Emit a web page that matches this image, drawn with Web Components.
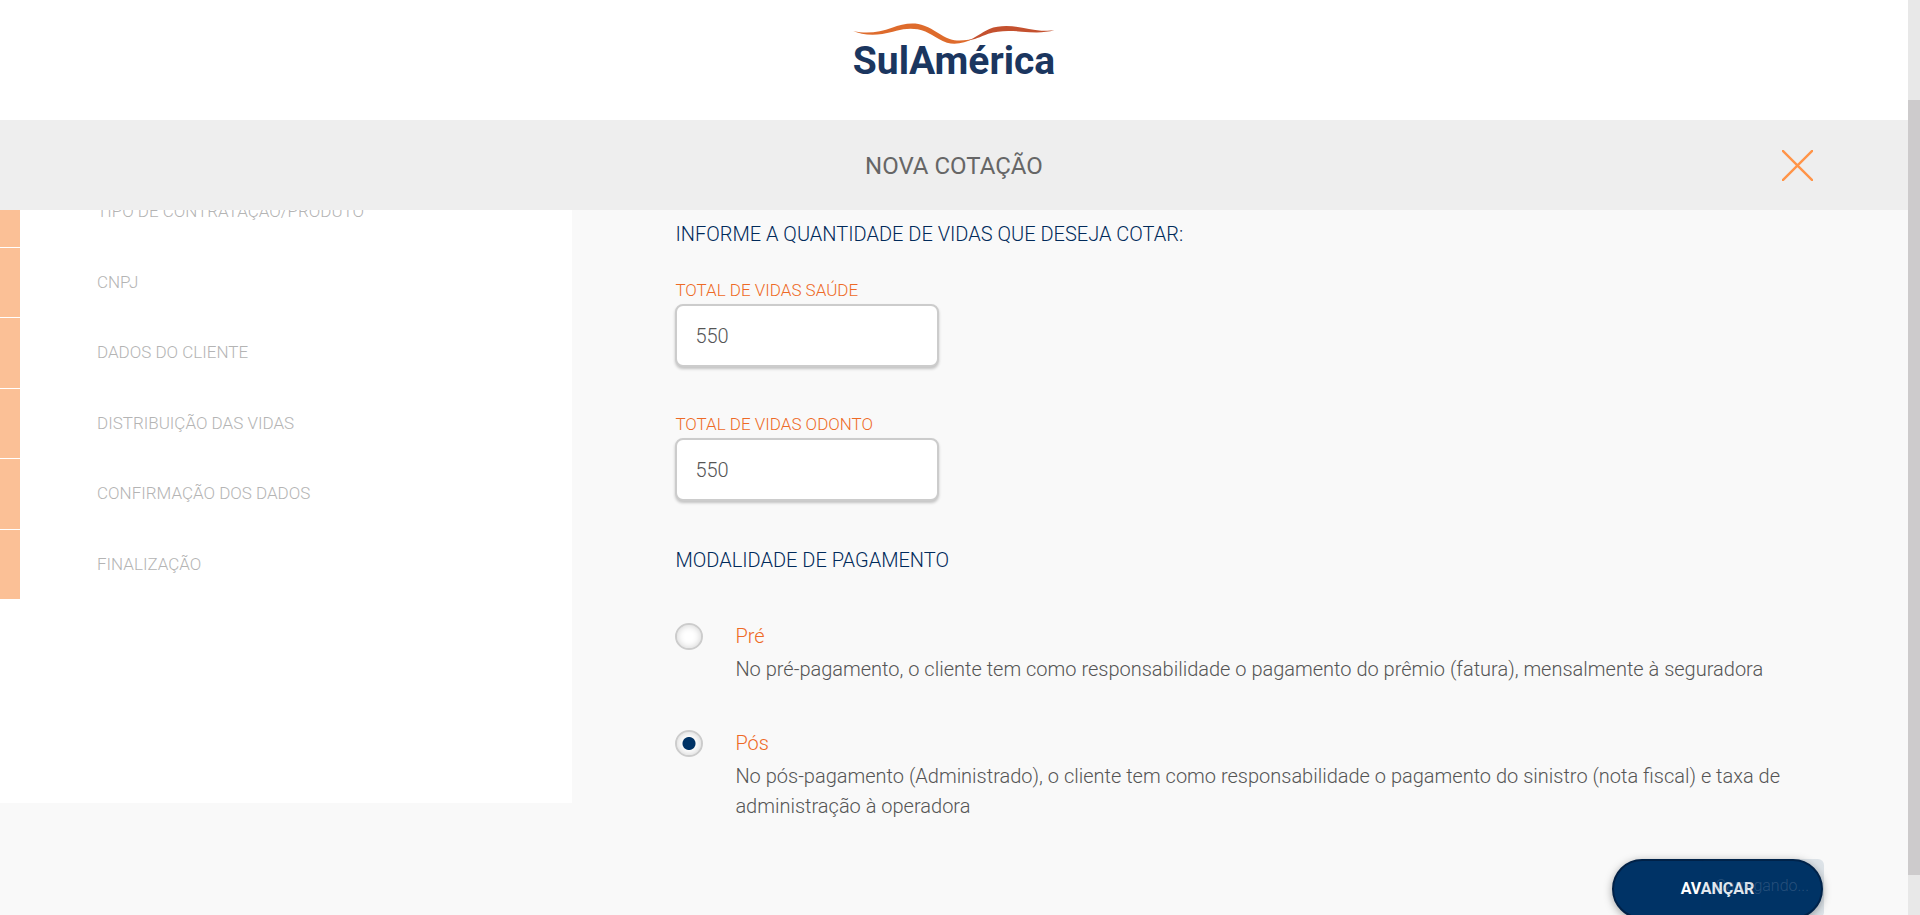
<!DOCTYPE html>
<html lang="pt-BR">
<head>
<meta charset="utf-8">
<meta name="viewport" content="width=device-width, initial-scale=1">
<title>Nova cotação - SulAmérica</title>
<style>
html, body { margin: 0; height: 100%; }
body {
  --navy: #003366;
  --orange: #ee6a26;
  --gray: #555;
  --line: #ccc;
  font-family: Roboto, "Liberation Sans", sans-serif;
  font-weight: 300;
  font-size: 20px;
  line-height: 30px;
  color: var(--gray);
  background: #f9f9f9;
}
</style>
</head>
<body>
<quote-app>
  <brand-header slot="header"></brand-header>
  <title-bar slot="header">NOVA COTAÇÃO</title-bar>
  <step-list slot="steps">
    <step-item>TIPO DE CONTRATAÇÃO/PRODUTO</step-item>
    <step-item>CNPJ</step-item>
    <step-item>DADOS DO CLIENTE</step-item>
    <step-item>DISTRIBUIÇÃO DAS VIDAS</step-item>
    <step-item>CONFIRMAÇÃO DOS DADOS</step-item>
    <step-item>FINALIZAÇÃO</step-item>
  </step-list>
  <quote-form>
    <section-heading>INFORME A QUANTIDADE DE VIDAS QUE DESEJA COTAR:</section-heading>
    <lives-field label="TOTAL DE VIDAS SAÚDE" value="550"></lives-field>
    <lives-field label="TOTAL DE VIDAS ODONTO" value="550"></lives-field>
    <section-heading>MODALIDADE DE PAGAMENTO</section-heading>
    <payment-options></payment-options>
    <form-actions></form-actions>
  </quote-form>
  <scroll-rail slot="rail"></scroll-rail>
</quote-app>

<script>
function define(name, html, setup) {
  const template = document.createElement('template');
  template.innerHTML = html;
  customElements.define(name, class extends HTMLElement {
    constructor() {
      super();
      this.attachShadow({ mode: 'open' }).append(template.content.cloneNode(true));
    }
    connectedCallback() { if (setup) setup(this, this.shadowRoot); }
  });
}

define('quote-app', `
<style>
  :host { display: grid; grid-template-columns: minmax(0, 1fr) 12px; height: 100vh; overflow: hidden; }
  .page { display: flex; flex-direction: column; min-height: 0; }
  main { flex: 1; min-height: 0; overflow: hidden; display: grid; grid-template-columns: 30% minmax(0, 1fr); align-items: start; }
</style>
<div class="page">
  <slot name="header"></slot>
  <main><slot name="steps"></slot><slot></slot></main>
</div>
<slot name="rail"></slot>`);

define('brand-header', `
<style>
  :host { display: flex; flex: none; justify-content: center; height: 120px; box-sizing: border-box; padding-top: 23px; background: #fff; }
  a { display: flex; flex-direction: column; align-items: center; text-decoration: none; color: #1b365f; font-size: 39px; line-height: 32px; font-weight: 700; }
  svg { display: block; width: 202px; height: 22px; }
</style>
<a href="#">
  <svg viewBox="40 38 606 66" aria-hidden="true">
    <path fill="#de6b2c" d="M41 62C85 72 122 64 157 52C188 41 222 34 254 46C286 58 304 77 330 86C348 92 366 91 387 88L400 86C378 95 350 106 322 97C286 85 268 62 234 57C194 50 164 65 128 71C94 76 61 72 41 62Z"/>
    <path fill="#c4512f" d="M385 90C406 84 424 67 449 56C478 44 515 46 548 52C584 59 616 64 644 60C616 68 583 67 546 64C506 60 475 61 446 70C420 80 404 88 385 90Z"/>
  </svg>
  <span>SulAmérica</span>
</a>`);

define('title-bar', `
<style>
  :host { display: grid; flex: none; grid-template-columns: 1fr auto 1fr; align-items: center; height: 90px; background: #eee; }
  h1 { grid-column: 2; margin: 0; padding-top: 2px; font-size: 24px; line-height: 32px; font-weight: 400; color: #666; }
  button { justify-self: end; display: block; margin-right: 95px; padding: 0; border: 0; background: none; cursor: pointer; }
  svg { display: block; width: 31px; height: 31px; }
</style>
<h1><slot></slot></h1>
<button type="button" aria-label="Fechar">
  <svg viewBox="0 0 31 31" fill="none" stroke="#ff9448" stroke-width="2.4"><path d="M0 0 31 31M31 0 0 31"/></svg>
</button>`);

define('step-list', `
<style>
  :host { display: block; min-height: 593px; overflow: hidden; background: #fff; }
  nav { display: grid; grid-auto-rows: 1fr; height: 423px; margin-top: -33px; }
</style>
<nav aria-label="Etapas"><slot></slot></nav>`);

define('step-item', `
<style>
  :host { display: flex; align-items: center; gap: 77px; margin-bottom: 1px; font-size: 17px; line-height: 20px; font-weight: 300; color: #b4b4b4; }
  i { align-self: stretch; width: 20px; background: #fbc096; }
  span { padding-bottom: 1px; }
</style>
<i></i><span><slot></slot></span>`);

define('quote-form', `
<style>
  :host { display: block; padding: 9px 85px 0 103px; }
</style>
<form><slot></slot></form>`);

define('section-heading', `
<style>
  :host { display: block; margin-bottom: 28px; }
  :host(:not(:first-child)) { margin-bottom: 46px; }
  h2 { margin: 0; font-size: 20px; line-height: 30px; font-weight: 300; color: #002a5a; }
</style>
<h2><slot></slot></h2>`);

define('lives-field', `
<style>
  :host { display: block; width: 264px; margin-bottom: 44px; }
  label { display: block; font-size: 17px; line-height: 27px; color: var(--orange); }
  input { display: block; width: 100%; height: 63px; box-sizing: border-box; padding: 0 18px; border: 2px solid var(--line); border-radius: 8px;
    background: #fff; font: inherit; color: var(--gray); box-shadow: 0 2px 3px rgba(0, 0, 0, .22); outline: 0; }
</style>
<label for="lives"></label>
<input id="lives" type="text" inputmode="numeric">`, (host, root) => {
  root.querySelector('label').textContent = host.getAttribute('label');
  root.querySelector('input').value = host.getAttribute('value');
});

define('payment-options', `
<style>
  :host { display: grid; gap: 44px; }
  .option { display: grid; grid-template-columns: 28px minmax(0, 1fr); column-gap: 32px; row-gap: 3px; }
  input { appearance: none; align-self: center; width: 28px; height: 27px; margin: 0; border: 2px solid var(--line); border-radius: 50%;
    background: #fff; box-shadow: inset 0 0 7px rgba(0, 0, 0, .18); }
  input:checked { background: radial-gradient(circle, var(--navy) 6px, #fff 7px); }
  label { color: var(--orange); }
  p { grid-column: 2; margin: 0; }
</style>
<div class="option">
  <input type="radio" name="mode" id="pre"><label for="pre">Pré</label>
  <p>No pré-pagamento, o cliente tem como responsabilidade o pagamento do prêmio (fatura), mensalmente à seguradora</p>
</div>
<div class="option">
  <input type="radio" name="mode" id="pos" checked><label for="pos">Pós</label>
  <p>No pós-pagamento (Administrado), o cliente tem como responsabilidade o pagamento do sinistro (nota fiscal) e taxa de administração à operadora</p>
</div>`);

define('form-actions', `
<style>
  :host { display: flex; justify-content: flex-end; position: relative; margin-top: 38px; }
  button { width: 211px; height: 60px; border: 2px solid #002147; border-radius: 30px; background: var(--navy); color: #fff;
    font: inherit; font-size: 16px; font-weight: 700; box-shadow: 0 2px 8px rgba(0, 0, 0, .35); cursor: pointer; }
  .toast { position: absolute; right: -1px; top: 0; padding: 15px 15px 20px; border-radius: 6px; background: rgba(0, 51, 102, .11);
    font-size: 16px; line-height: 24px; color: rgba(130, 150, 180, .3); pointer-events: none; }
</style>
<button type="button">AVANÇAR</button>
<div class="toast" role="status">Carregando...</div>`);

define('scroll-rail', `
<style>
  :host { display: grid; grid-template-rows: 100px minmax(0, 1fr) 40px; background: #e8e8e8; }
  div { grid-row: 2; background: #cdcbcc; }
</style>
<div></div>`);
</script>
</body>
</html>
